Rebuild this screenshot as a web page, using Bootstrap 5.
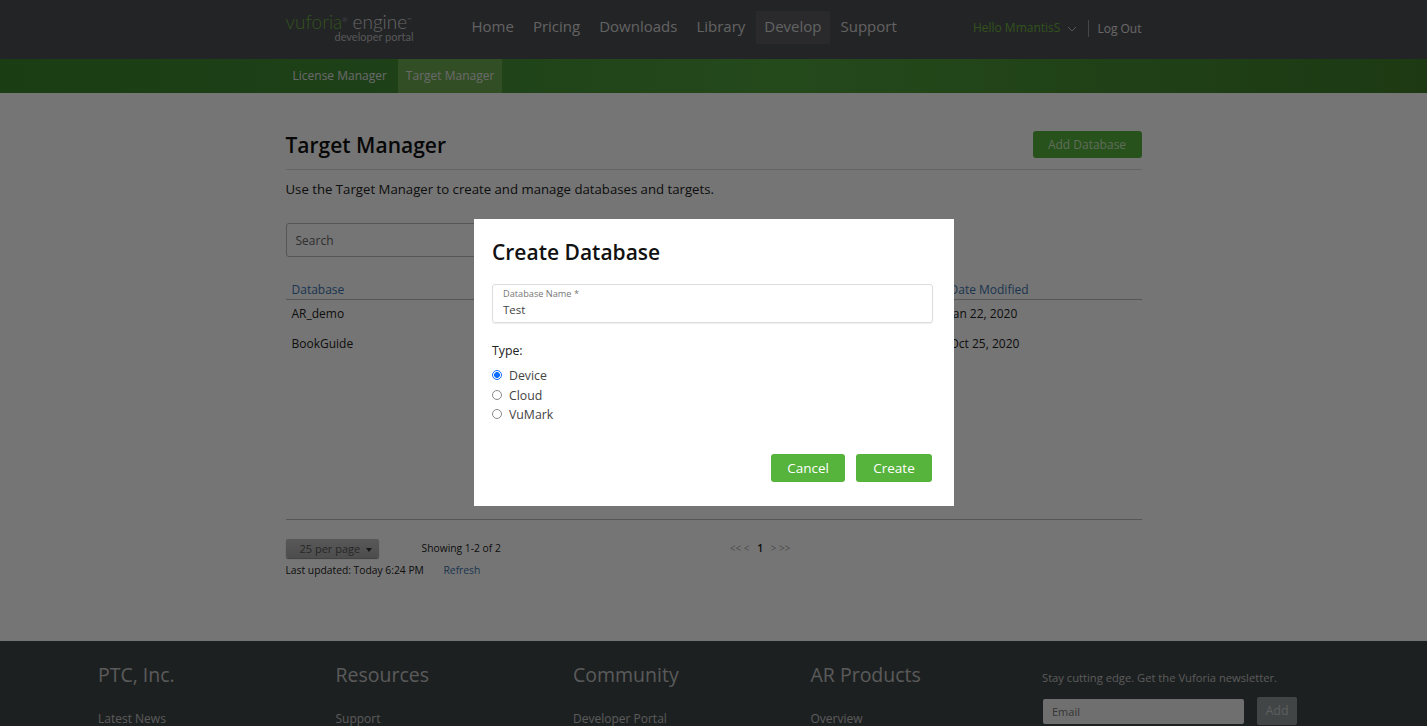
<!DOCTYPE html>
<html lang="en">
<head>
    <meta charset="UTF-8">
    <meta name="viewport" content="width=device-width, initial-scale=1.0">
    <title>Vuforia Engine Developer Portal - Target Manager</title>
    <link href="https://cdn.jsdelivr.net/npm/bootstrap@5.3.0/dist/css/bootstrap.min.css" rel="stylesheet">
    <style>
        body {
            font-family: "Open Sans", "Liberation Sans", sans-serif;
            font-size: 13px;
            color: #222;
            background-color: #fff;
        }
        .page-wrap { width: 856px; margin: 0 auto; }

        /* top bar */
        .top-bar { background-color: #4e4f54; height: 59px; }
        .brand-box { width: 128px; margin-right: 50px; line-height: 1; padding-top: 12px; }
        .brand-top { font-family: Lato, sans-serif; font-size: 19px; font-weight: 300; color: #d8d8d8; white-space: nowrap; }
        .brand-top span { color: #6cb33f; }
        .brand-top sup { font-size: 6px; top: -1.2em; }
        .brand-sub { font-family: Lato, sans-serif; font-size: 11px; text-align: right; color: #bdbdbd; }
        .main-link { color: #d6d6d6; font-size: 15px; padding: 0 8px; margin: 11px 3px 0 0; height: 33px; line-height: 31px; text-decoration: none; }
        .main-link.on { background-color: #5c5d62; }
        .user-box { padding-top: 19px; }
        .user-name { color: #6cb33f; font-size: 12px; }
        .user-chev { margin: 2px 11px 0 7px; }
        .log-out { color: #e0e0e0; font-size: 12px; border-left: 1px solid #999; padding: 0 0 0 8px; text-decoration: none; line-height: 17px; }

        /* green bar */
        .sub-bar { height: 34px; background: linear-gradient(90deg, #3a862c 0%, #418c35 25%, #50a03c 55%, #3e7d2a 100%); }
        .sub-link { color: #e4e4e4; font-size: 12px; line-height: 34px; padding: 0 7px; text-decoration: none; height: 34px; }
        .sub-link.on { background-color: #6dab50; margin-left: 4px; padding: 0 8px; }

        /* content */
        .title-row { padding-top: 38px; height: 77px; border-bottom: 1px solid #ddd; }
        .page-title { font-size: 21px; font-weight: 600; color: #111; margin: 1px 0 0; line-height: 27px; }
        .btn-add { background-color: #56b33b; color: #cfe8c4; border: 0; border-radius: 3px; font-size: 12px; width: 109px; height: 27px; padding: 1px 0 0; }
        .intro { margin: 10px 0 0; line-height: 19px; font-size: 13.2px; }
        .search-box { width: 200px; height: 34px; margin-top: 24px; border: 1px solid #bbb; border-radius: 3px; font-size: 12px; padding: 0 9px; background: transparent; }
        .search-box::placeholder { color: #666; }
        .db-table { margin: 21px 0 0; font-size: 12px; }
        .db-table th, .db-table td { padding: 0 6px; background: transparent; color: #222; font-weight: 400; border: 0; }
        .db-table th { color: #3d75ad; height: 21px; padding-top: 1px; border-bottom: 1px solid #bbb; }
        .db-table td { height: 30px; }
        .db-table .date-col { width: 198px; }
        .table-foot { border-top: 1px solid #bbb; margin-top: 160px; padding-top: 19px; font-size: 10.3px; }
        .per-page { width: 93px; height: 19px; font-size: 11px; line-height: 19px; padding: 0 0 0 14px; color: #555; border: 0; border-radius: 2px; background: linear-gradient(#c0c0c0, #a8a8a8); box-shadow: 0 1px 1px #888; margin-right: 43px; text-align: left; }
        .per-page::after { content: ""; display: inline-block; border: 3px solid transparent; border-top: 4px solid #333; border-bottom: 0; margin: 0 0 1px 6px; }
        .pager-box { margin-left: 229px; color: #aaa; font-size: 10px; }
        .pager-box b { color: #222; font-weight: 600; font-size: 10.5px; margin: 0 5px; }
        .last-row { margin-top: 5px; }
        .refresh-link { color: #3d75ad; text-decoration: none; margin-left: 17px; }

        /* footer */
        .site-foot { background-color: #3f4648; margin-top: 63px; height: 300px; padding-top: 20px; }
        .foot-cols { padding-left: 98px; }
        .foot-col { width: 237.5px; }
        .foot-col h5 { font-size: 19.5px; font-weight: 400; color: #c4c4c4; margin: 0; line-height: 27px; }
        .foot-col a { display: block; font-size: 12px; color: #c4c4c4; text-decoration: none; margin-top: 22px; line-height: 18px; }
        .news-col { margin-left: -6px; padding-top: 9px; }
        .news-col p { font-size: 11.2px; color: #c4c4c4; margin: 0 0 11px; line-height: 16px; }
        .news-input { width: 201px; height: 25px; font-size: 11px; padding: 0 9px; margin-left: 1px; background: #f2f2f2; border: 0; border-radius: 2px; }
        .news-btn { width: 40px; height: 28px; margin-left: 13px; background: #909698; color: #c8ccce; border: 0; border-radius: 2px; font-size: 12.5px; padding: 0; }

        /* modal */
        .modal-backdrop.show { opacity: .54; }
        .create-dialog { max-width: 480px; width: 480px; margin: 219px 0 0 474px; }
        .create-box { border: 0; border-radius: 0; height: 287px; padding: 20px 18px 0; color: #333; }
        .create-title { font-size: 21px; font-weight: 600; color: #111; line-height: 27px; margin: 0 0 18px; }
        .name-field { border: 1px solid #ddd; border-radius: 3px; height: 39px; width: 441px; padding: 2px 10px 0; box-shadow: 0 1px 1px #eee; }
        .name-field label { display: block; font-size: 9.2px; color: #777; line-height: 13px; margin: 0; }
        .name-field input { border: 0; outline: 0; padding: 0; width: 100%; font-size: 11.5px; color: #444; line-height: 15px; height: 15px; }
        .type-label { font-size: 12.3px; margin: 19px 0 7px; line-height: 17px; color: #222; }
        .type-check { min-height: 0; height: 19.5px; padding-left: 17px; margin: 0; font-size: 12.3px; line-height: 19.5px; color: #444; }
        .type-check .form-check-input { width: 10px; height: 10px; margin: 4px 0 0 -17px; border-color: #8a8a8a; }
        .type-check .form-check-input:checked { background-color: #fff; border-color: #0d6efd; background-image: radial-gradient(circle, #0d6efd 0 2.6px, #fff 3.2px); }
        .create-btns { margin-top: 29px; width: 440px; }
        .btn-green { background-color: #56b33b; color: #fff; border: 0; border-radius: 3px; font-size: 13.5px; height: 28px; padding: 1px 0 0; }
        .btn-cancel { width: 74px; margin-right: 11px; }
        .btn-create { width: 76px; }
    </style>
</head>
<body class="overflow-hidden vh-100">

<!-- Top nav -->
<div class="top-bar">
    <div class="page-wrap d-flex align-items-start">
        <div class="brand-box">
            <div class="brand-top"><span>vuforia</span><sup>&reg;</sup> engine<sup>&trade;</sup></div>
            <div class="brand-sub">developer portal</div>
        </div>
        <a href="#" class="main-link">Home</a>
        <a href="#" class="main-link">Pricing</a>
        <a href="#" class="main-link">Downloads</a>
        <a href="#" class="main-link">Library</a>
        <a href="#" class="main-link on">Develop</a>
        <a href="#" class="main-link">Support</a>
        <div class="user-box ms-auto d-flex align-items-center">
            <span class="user-name">Hello MmantisS</span>
            <svg class="user-chev" width="10" height="6" viewBox="0 0 10 6"><path d="M1 1l4 4 4-4" fill="none" stroke="#bbb" stroke-width="1"/></svg>
            <a href="#" class="log-out">Log Out</a>
        </div>
    </div>
</div>

<!-- Sub nav -->
<div class="sub-bar">
    <div class="page-wrap d-flex">
        <a href="#" class="sub-link">License Manager</a>
        <a href="#" class="sub-link on">Target Manager</a>
    </div>
</div>

<!-- Main Content -->
<div class="page-wrap">
    <div class="title-row d-flex justify-content-between align-items-start">
        <h1 class="page-title">Target Manager</h1>
        <button class="btn-add">Add Database</button>
    </div>
    <p class="intro">Use the Target Manager to create and manage databases and targets.</p>
    <input class="search-box d-block" type="text" placeholder="Search">
    <table class="table align-middle db-table">
        <thead>
            <tr><th>Database</th><th class="date-col">Date Modified</th></tr>
        </thead>
        <tbody>
            <tr><td>AR_demo</td><td>Jan 22, 2020</td></tr>
            <tr><td>BookGuide</td><td>Oct 25, 2020</td></tr>
        </tbody>
    </table>
    <div class="table-foot">
        <div class="d-flex align-items-center">
            <button class="per-page">25 per page</button>
            <span>Showing 1-2 of 2</span>
            <span class="pager-box">&lt;&lt; &lt; <b>1</b> &gt; &gt;&gt;</span>
        </div>
        <div class="last-row">Last updated: Today 6:24 PM <a href="#" class="refresh-link">Refresh</a></div>
    </div>
</div>

<!-- Footer -->
<div class="site-foot">
    <div class="foot-cols d-flex">
        <div class="foot-col"><h5>PTC, Inc.</h5><a href="#">Latest News</a></div>
        <div class="foot-col"><h5>Resources</h5><a href="#">Support</a></div>
        <div class="foot-col"><h5>Community</h5><a href="#">Developer Portal</a></div>
        <div class="foot-col"><h5>AR Products</h5><a href="#">Overview</a></div>
        <div class="news-col">
            <p>Stay cutting edge. Get the Vuforia newsletter.</p>
            <div class="d-flex align-items-center">
                <input class="news-input" type="text" placeholder="Email">
                <button class="news-btn">Add</button>
            </div>
        </div>
    </div>
</div>

<!-- Create Database modal -->
<div class="modal-backdrop show"></div>
<div class="modal show d-block" tabindex="-1">
    <div class="modal-dialog create-dialog">
        <div class="modal-content create-box">
            <h4 class="create-title">Create Database</h4>
            <div class="name-field">
                <label for="dbName">Database Name *</label>
                <input id="dbName" type="text" value="Test">
            </div>
            <div class="type-label">Type:</div>
            <div class="form-check type-check">
                <input class="form-check-input" type="radio" name="dbType" id="t1" checked>
                <label class="form-check-label" for="t1">Device</label>
            </div>
            <div class="form-check type-check">
                <input class="form-check-input" type="radio" name="dbType" id="t2">
                <label class="form-check-label" for="t2">Cloud</label>
            </div>
            <div class="form-check type-check">
                <input class="form-check-input" type="radio" name="dbType" id="t3">
                <label class="form-check-label" for="t3">VuMark</label>
            </div>
            <div class="create-btns d-flex justify-content-end">
                <button class="btn-green btn-cancel">Cancel</button>
                <button class="btn-green btn-create">Create</button>
            </div>
        </div>
    </div>
</div>

<script src="https://cdn.jsdelivr.net/npm/bootstrap@5.3.0/dist/js/bootstrap.bundle.min.js"></script>
</body>
</html>
